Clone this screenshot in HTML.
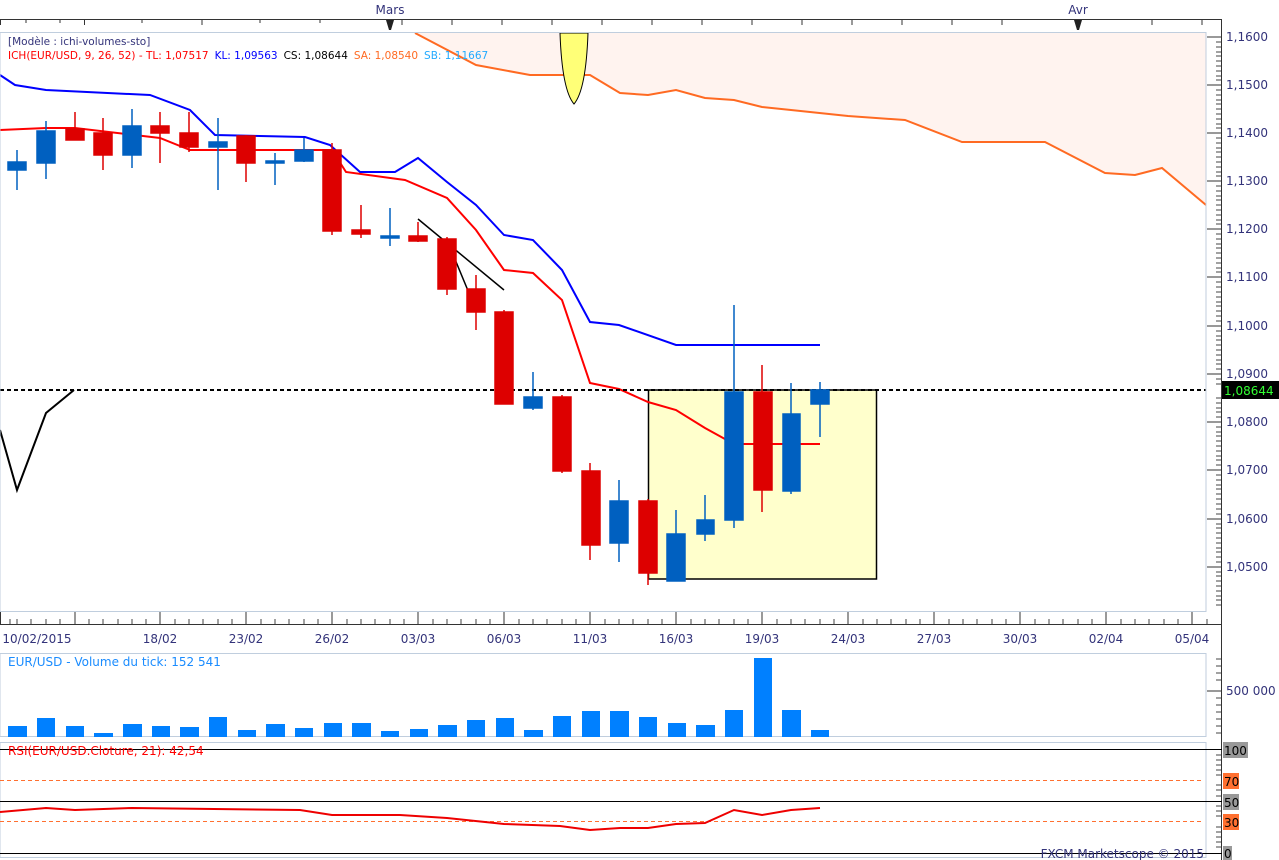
<!DOCTYPE html>
<html><head><meta charset="utf-8"><style>
html,body{margin:0;padding:0;background:#fff;width:1279px;height:860px;overflow:hidden}
svg{display:block}
text{font-family:"DejaVu Sans","Liberation Sans",sans-serif;font-size:12px}
.hd{font-size:10.5px}
</style></head><body>
<svg width="1279" height="860" viewBox="0 0 1279 860" xmlns="http://www.w3.org/2000/svg">
<!-- top axis -->
<text x="390" y="14" fill="#33337a" text-anchor="middle">Mars</text>
<text x="1078" y="14" fill="#33337a" text-anchor="middle">Avr</text>
<line x1="0" y1="19.5" x2="1222" y2="19.5" stroke="#333"/>
<g stroke="#333">
<line x1="0.5" y1="19" x2="0.5" y2="25"/><line x1="84.5" y1="19" x2="84.5" y2="25"/><line x1="202" y1="19" x2="202" y2="25"/><line x1="402" y1="19" x2="402" y2="25"/><line x1="452" y1="19" x2="452" y2="25"/><line x1="502" y1="19" x2="502" y2="25"/><line x1="552" y1="19" x2="552" y2="25"/><line x1="602" y1="19" x2="602" y2="25"/><line x1="652" y1="19" x2="652" y2="25"/><line x1="702" y1="19" x2="702" y2="25"/><line x1="752" y1="19" x2="752" y2="25"/><line x1="802" y1="19" x2="802" y2="25"/><line x1="852" y1="19" x2="852" y2="25"/><line x1="902" y1="19" x2="902" y2="25"/><line x1="952" y1="19" x2="952" y2="25"/><line x1="1002" y1="19" x2="1002" y2="25"/><line x1="1152" y1="19" x2="1152" y2="25"/><line x1="1202" y1="19" x2="1202" y2="25"/>
<line x1="26" y1="19" x2="26" y2="23"/><line x1="60" y1="19" x2="60" y2="23"/><line x1="142" y1="19" x2="142" y2="23"/><line x1="260" y1="19" x2="260" y2="23"/><line x1="320" y1="19" x2="320" y2="23"/>
</g>
<polygon points="386,20 394,20 391,30 389,30" fill="#222"/>
<polygon points="1074,20 1082,20 1079,30 1077,30" fill="#222"/>

<!-- main panel -->
<rect x="0" y="32" width="1206" height="580" fill="#fff"/>
<polygon points="415,33 476,65 530,75 590,75 620,93 648,95 676,90 705,98 734,100 762,107 791,110 848,116 905,120 962,142 1045,142 1105,173 1135,175 1162,168 1206,205 1206,33" fill="#fff3ef"/>
<polyline points="415,33 476,65 530,75 590,75 620,93 648,95 676,90 705,98 734,100 762,107 791,110 848,116 905,120 962,142 1045,142 1105,173 1135,175 1162,168 1206,205" fill="none" stroke="#ff6a22" stroke-width="2"/>
<path d="M560,33 L588,33 Q586,90 574,104 Q562,90 560,33 Z" fill="#ffff77" stroke="#000" stroke-width="1"/>
<rect x="648.5" y="390" width="228" height="189" fill="#ffffcc" stroke="#000" stroke-width="1.5"/>
<polyline points="0,75 15,85 46,90 150,95 190,110 215,135 305,137 330,145 360,172 395,172 418,158 447,182 476,205 504,235 533,240 562,270 590,322 619,325 676,345 820,345" fill="none" stroke="#0000ff" stroke-width="2"/>
<polyline points="0,130 46,128 75,128 160,138 190,150 305,150 332,150 346,172 405,180 447,198 476,230 504,270 533,273 562,300 590,383 619,389 648,402 676,410 705,428 734,444 820,444" fill="none" stroke="#ff0000" stroke-width="2"/>
<polyline points="0,430 17,490 46,413 74,390" fill="none" stroke="#000" stroke-width="2"/>
<line x1="0" y1="390" x2="1206" y2="390" stroke="#000" stroke-width="2" stroke-dasharray="4,3"/>
<line x1="418" y1="219" x2="504" y2="290" stroke="#000" stroke-width="1.5"/>
<line x1="447" y1="240" x2="476" y2="310" stroke="#000" stroke-width="1.5"/>
<g stroke-width="1.5">
<g stroke="#0060c0" fill="#0060c0">
<line x1="17" y1="150" x2="17" y2="190"/><rect x="8" y="162" width="18" height="8"/>
<line x1="46" y1="121" x2="46" y2="179"/><rect x="37" y="131" width="18" height="32"/>
<line x1="132" y1="109" x2="132" y2="168"/><rect x="123" y="126" width="18" height="29"/>
<line x1="218" y1="118" x2="218" y2="190"/><rect x="209" y="142" width="18" height="5"/>
<line x1="275" y1="153" x2="275" y2="185"/><rect x="266" y="161" width="18" height="2"/>
<line x1="304" y1="138" x2="304" y2="162"/><rect x="295" y="150" width="18" height="11"/>
<line x1="390" y1="208" x2="390" y2="246"/><rect x="381" y="236" width="18" height="2"/>
<line x1="533" y1="372" x2="533" y2="410"/><rect x="524" y="397" width="18" height="11"/>
<line x1="619" y1="480" x2="619" y2="562"/><rect x="610" y="501" width="18" height="42"/>
<line x1="676" y1="510" x2="676" y2="581"/><rect x="667" y="534" width="18" height="47"/>
<line x1="705" y1="495" x2="705" y2="541"/><rect x="697" y="520" width="17" height="14"/>
<line x1="734" y1="305" x2="734" y2="528"/><rect x="725" y="392" width="18" height="128"/>
<line x1="791" y1="383" x2="791" y2="494"/><rect x="783" y="414" width="17" height="77"/>
<line x1="820" y1="382" x2="820" y2="437"/><rect x="811" y="390" width="18" height="14"/>
</g>
<g stroke="#dd0000" fill="#dd0000">
<line x1="75" y1="112" x2="75" y2="140"/><rect x="66" y="129" width="18" height="11"/>
<line x1="103" y1="118" x2="103" y2="170"/><rect x="94" y="133" width="18" height="22"/>
<line x1="160" y1="112" x2="160" y2="163"/><rect x="151" y="126" width="18" height="7"/>
<line x1="189" y1="112" x2="189" y2="152"/><rect x="180" y="133" width="18" height="14"/>
<line x1="246" y1="135" x2="246" y2="182"/><rect x="237" y="136" width="18" height="27"/>
<line x1="332" y1="143" x2="332" y2="235"/><rect x="323" y="150" width="18" height="81"/>
<line x1="361" y1="205" x2="361" y2="238"/><rect x="352" y="230" width="18" height="4"/>
<line x1="418" y1="222" x2="418" y2="242"/><rect x="409" y="236" width="18" height="5"/>
<line x1="447" y1="237" x2="447" y2="295"/><rect x="438" y="239" width="18" height="50"/>
<line x1="476" y1="275" x2="476" y2="330"/><rect x="467" y="289" width="18" height="23"/>
<line x1="504" y1="310" x2="504" y2="404"/><rect x="495" y="312" width="18" height="92"/>
<line x1="562" y1="395" x2="562" y2="473"/><rect x="553" y="397" width="18" height="74"/>
<line x1="590" y1="463" x2="590" y2="560"/><rect x="582" y="471" width="18" height="74"/>
<line x1="648" y1="499" x2="648" y2="585"/><rect x="639" y="501" width="18" height="72"/>
<line x1="762" y1="365" x2="762" y2="512"/><rect x="754" y="392" width="18" height="98"/>
</g>
</g>
<rect x="0" y="32.5" width="1206" height="579" fill="none" stroke="#c0cede"/>
<text class="hd" x="8" y="45" fill="#33337a">[Modèle : ichi-volumes-sto]</text>
<text class="hd" x="8" y="59"><tspan fill="#ff0000">ICH(EUR/USD, 9, 26, 52) -  TL: 1,07517</tspan><tspan fill="#0000ff" dx="6">KL: 1,09563</tspan><tspan fill="#000" dx="6">CS: 1,08644</tspan><tspan fill="#ff6a22" dx="6">SA: 1,08540</tspan><tspan fill="#22aaff" dx="6">SB: 1,11667</tspan></text>

<!-- price axis -->
<line x1="1221.5" y1="20" x2="1221.5" y2="860" stroke="#333"/>
<g stroke="#333">
<line x1="1207" y1="37" x2="1221" y2="37"/><line x1="1207" y1="85" x2="1221" y2="85"/><line x1="1207" y1="133" x2="1221" y2="133"/><line x1="1207" y1="181" x2="1221" y2="181"/><line x1="1207" y1="229" x2="1221" y2="229"/><line x1="1207" y1="277" x2="1221" y2="277"/><line x1="1207" y1="326" x2="1221" y2="326"/><line x1="1207" y1="374" x2="1221" y2="374"/><line x1="1207" y1="422" x2="1221" y2="422"/><line x1="1207" y1="470" x2="1221" y2="470"/><line x1="1207" y1="519" x2="1221" y2="519"/><line x1="1207" y1="567" x2="1221" y2="567"/>
</g>
<path d="M1216 42h5M1216 47h5M1216 52h5M1216 56h5M1216 61h5M1216 66h5M1216 71h5M1216 76h5M1216 80h5M1216 90h5M1216 95h5M1216 100h5M1216 104h5M1216 109h5M1216 114h5M1216 119h5M1216 124h5M1216 128h5M1216 138h5M1216 143h5M1216 148h5M1216 152h5M1216 157h5M1216 162h5M1216 167h5M1216 172h5M1216 176h5M1216 186h5M1216 191h5M1216 196h5M1216 200h5M1216 205h5M1216 210h5M1216 215h5M1216 220h5M1216 224h5M1216 234h5M1216 239h5M1216 244h5M1216 248h5M1216 253h5M1216 258h5M1216 263h5M1216 268h5M1216 272h5M1216 282h5M1216 287h5M1216 292h5M1216 297h5M1216 302h5M1216 306h5M1216 311h5M1216 316h5M1216 321h5M1216 331h5M1216 336h5M1216 340h5M1216 345h5M1216 350h5M1216 355h5M1216 360h5M1216 364h5M1216 369h5M1216 379h5M1216 384h5M1216 398h5M1216 403h5M1216 408h5M1216 412h5M1216 417h5M1216 427h5M1216 432h5M1216 436h5M1216 441h5M1216 446h5M1216 451h5M1216 456h5M1216 460h5M1216 465h5M1216 475h5M1216 480h5M1216 485h5M1216 489h5M1216 494h5M1216 499h5M1216 504h5M1216 509h5M1216 514h5M1216 524h5M1216 528h5M1216 533h5M1216 538h5M1216 543h5M1216 548h5M1216 552h5M1216 557h5M1216 562h5M1216 572h5M1216 576h5M1216 581h5M1216 586h5M1216 591h5M1216 596h5M1216 600h5M1216 605h5" stroke="#444"/>
<g fill="#33337a">
<text x="1226" y="41">1,1600</text><text x="1226" y="89">1,1500</text><text x="1226" y="137">1,1400</text><text x="1226" y="185">1,1300</text><text x="1226" y="233">1,1200</text><text x="1226" y="281">1,1100</text><text x="1226" y="330">1,1000</text><text x="1226" y="378">1,0900</text><text x="1226" y="426">1,0800</text><text x="1226" y="474">1,0700</text><text x="1226" y="523">1,0600</text><text x="1226" y="571">1,0500</text>
</g>
<rect x="1222" y="381" width="57" height="18" fill="#000"/>
<text x="1224" y="395" fill="#33ff33">1,08644</text>

<!-- date axis -->
<line x1="0" y1="624.5" x2="1222" y2="624.5" stroke="#333"/>
<g stroke="#333">
<line x1="0.5" y1="612" x2="0.5" y2="624"/><line x1="75" y1="612" x2="75" y2="624"/><line x1="160" y1="612" x2="160" y2="624"/><line x1="246" y1="612" x2="246" y2="624"/><line x1="332" y1="612" x2="332" y2="624"/><line x1="418" y1="612" x2="418" y2="624"/><line x1="504" y1="612" x2="504" y2="624"/><line x1="590" y1="612" x2="590" y2="624"/><line x1="676" y1="612" x2="676" y2="624"/><line x1="762" y1="612" x2="762" y2="624"/><line x1="848" y1="612" x2="848" y2="624"/><line x1="934" y1="612" x2="934" y2="624"/><line x1="1020" y1="612" x2="1020" y2="624"/><line x1="1106" y1="612" x2="1106" y2="624"/><line x1="1192" y1="612" x2="1192" y2="624"/>
</g>
<path d="M10 619v5M17 619v5M31 619v5M46 619v5M60 619v5M89 619v5M103 619v5M118 619v5M132 619v5M146 619v5M175 619v5M189 619v5M203 619v5M218 619v5M232 619v5M261 619v5M275 619v5M289 619v5M304 619v5M318 619v5M347 619v5M361 619v5M375 619v5M390 619v5M404 619v5M433 619v5M447 619v5M461 619v5M476 619v5M490 619v5M519 619v5M533 619v5M547 619v5M562 619v5M576 619v5M605 619v5M619 619v5M633 619v5M648 619v5M662 619v5M691 619v5M705 619v5M719 619v5M734 619v5M748 619v5M777 619v5M791 619v5M805 619v5M820 619v5M834 619v5M863 619v5M877 619v5M891 619v5M906 619v5M920 619v5M949 619v5M963 619v5M977 619v5M992 619v5M1006 619v5M1035 619v5M1049 619v5M1063 619v5M1078 619v5M1092 619v5M1121 619v5M1135 619v5M1149 619v5M1164 619v5M1178 619v5M1207 619v5" stroke="#444"/>
<g fill="#33337a" text-anchor="middle">
<text x="37" y="643">10/02/2015</text><text x="160" y="643">18/02</text><text x="246" y="643">23/02</text><text x="332" y="643">26/02</text><text x="418" y="643">03/03</text><text x="504" y="643">06/03</text><text x="590" y="643">11/03</text><text x="676" y="643">16/03</text><text x="762" y="643">19/03</text><text x="848" y="643">24/03</text><text x="934" y="643">27/03</text><text x="1020" y="643">30/03</text><text x="1106" y="643">02/04</text><text x="1192" y="643">05/04</text>
</g>

<!-- volume panel -->
<rect x="0" y="653.5" width="1206" height="83" fill="none" stroke="#c0cede"/>
<text x="8" y="666" fill="#1a8cff">EUR/USD - Volume du tick: 152 541</text>
<g fill="#0080ff">
<rect x="8" y="726" width="19" height="11"/><rect x="37" y="718" width="18" height="19"/><rect x="66" y="726" width="18" height="11"/><rect x="94" y="733" width="19" height="4"/><rect x="123" y="724" width="19" height="13"/><rect x="152" y="726" width="18" height="11"/><rect x="180" y="727" width="19" height="10"/><rect x="209" y="717" width="18" height="20"/><rect x="238" y="730" width="18" height="7"/><rect x="266" y="724" width="19" height="13"/><rect x="295" y="728" width="18" height="9"/><rect x="324" y="723" width="18" height="14"/><rect x="352" y="723" width="19" height="14"/><rect x="381" y="731" width="18" height="6"/><rect x="410" y="729" width="18" height="8"/><rect x="438" y="725" width="19" height="12"/><rect x="467" y="720" width="18" height="17"/><rect x="496" y="718" width="18" height="19"/><rect x="524" y="730" width="19" height="7"/><rect x="553" y="716" width="18" height="21"/><rect x="582" y="711" width="18" height="26"/><rect x="610" y="711" width="19" height="26"/><rect x="639" y="717" width="18" height="20"/><rect x="668" y="723" width="18" height="14"/><rect x="696" y="725" width="19" height="12"/><rect x="725" y="710" width="18" height="27"/><rect x="754" y="658" width="18" height="79"/><rect x="782" y="710" width="19" height="27"/><rect x="811" y="730" width="18" height="7"/>
</g>
<line x1="1207" y1="691" x2="1221" y2="691" stroke="#333"/>
<path d="M1216 659h5M1216 666h5M1216 673h5M1216 680h5M1216 698h5M1216 705h5M1216 712h5M1216 719h5M1216 726h5M1216 733h5" stroke="#444"/>
<text x="1226" y="695" fill="#33337a">500 000</text>

<!-- RSI panel -->
<rect x="0" y="742.5" width="1206" height="115" fill="none" stroke="#c0cede"/>
<line x1="0" y1="749.5" x2="1222" y2="749.5" stroke="#000"/>
<line x1="0" y1="780.5" x2="1203" y2="780.5" stroke="#ff7030" stroke-dasharray="4,3"/>
<line x1="0" y1="801.5" x2="1222" y2="801.5" stroke="#000"/>
<line x1="0" y1="821.5" x2="1203" y2="821.5" stroke="#ff7030" stroke-dasharray="4,3"/>
<line x1="0" y1="853.5" x2="1222" y2="853.5" stroke="#000"/>
<polyline points="0,812 46,808 75,810 132,808 300,810 332,815 400,815 447,818 504,824 560,826 590,830 620,828 648,828 676,824 705,823 734,810 762,815 791,810 820,808" fill="none" stroke="#ee0000" stroke-width="2"/>
<text x="8" y="755" fill="#ff0000">RSI(EUR/USD.Cloture, 21): 42,54</text>
<path d="M1216 755h5M1216 760h5M1216 765h5M1216 770h5M1216 775h5M1216 785h5M1216 790h5M1216 796h5M1216 806h5M1216 811h5M1216 816h5M1216 827h5M1216 832h5M1216 837h5M1216 842h5M1216 847h5" stroke="#444"/>
<rect x="1223" y="742" width="25" height="16" fill="#999"/><text x="1224" y="755" fill="#000">100</text>
<rect x="1223" y="773" width="16" height="16" fill="#ff7030"/><text x="1224" y="786" fill="#000">70</text>
<rect x="1223" y="794" width="16" height="16" fill="#999"/><text x="1224" y="807" fill="#000">50</text>
<rect x="1223" y="814" width="16" height="16" fill="#ff7030"/><text x="1224" y="827" fill="#000">30</text>
<rect x="1223" y="846" width="9" height="14" fill="#999"/><text x="1224" y="858" fill="#000">0</text>
<text x="1204" y="858" fill="#33337a" text-anchor="end">FXCM Marketscope © 2015</text>
</svg>
</body></html>
